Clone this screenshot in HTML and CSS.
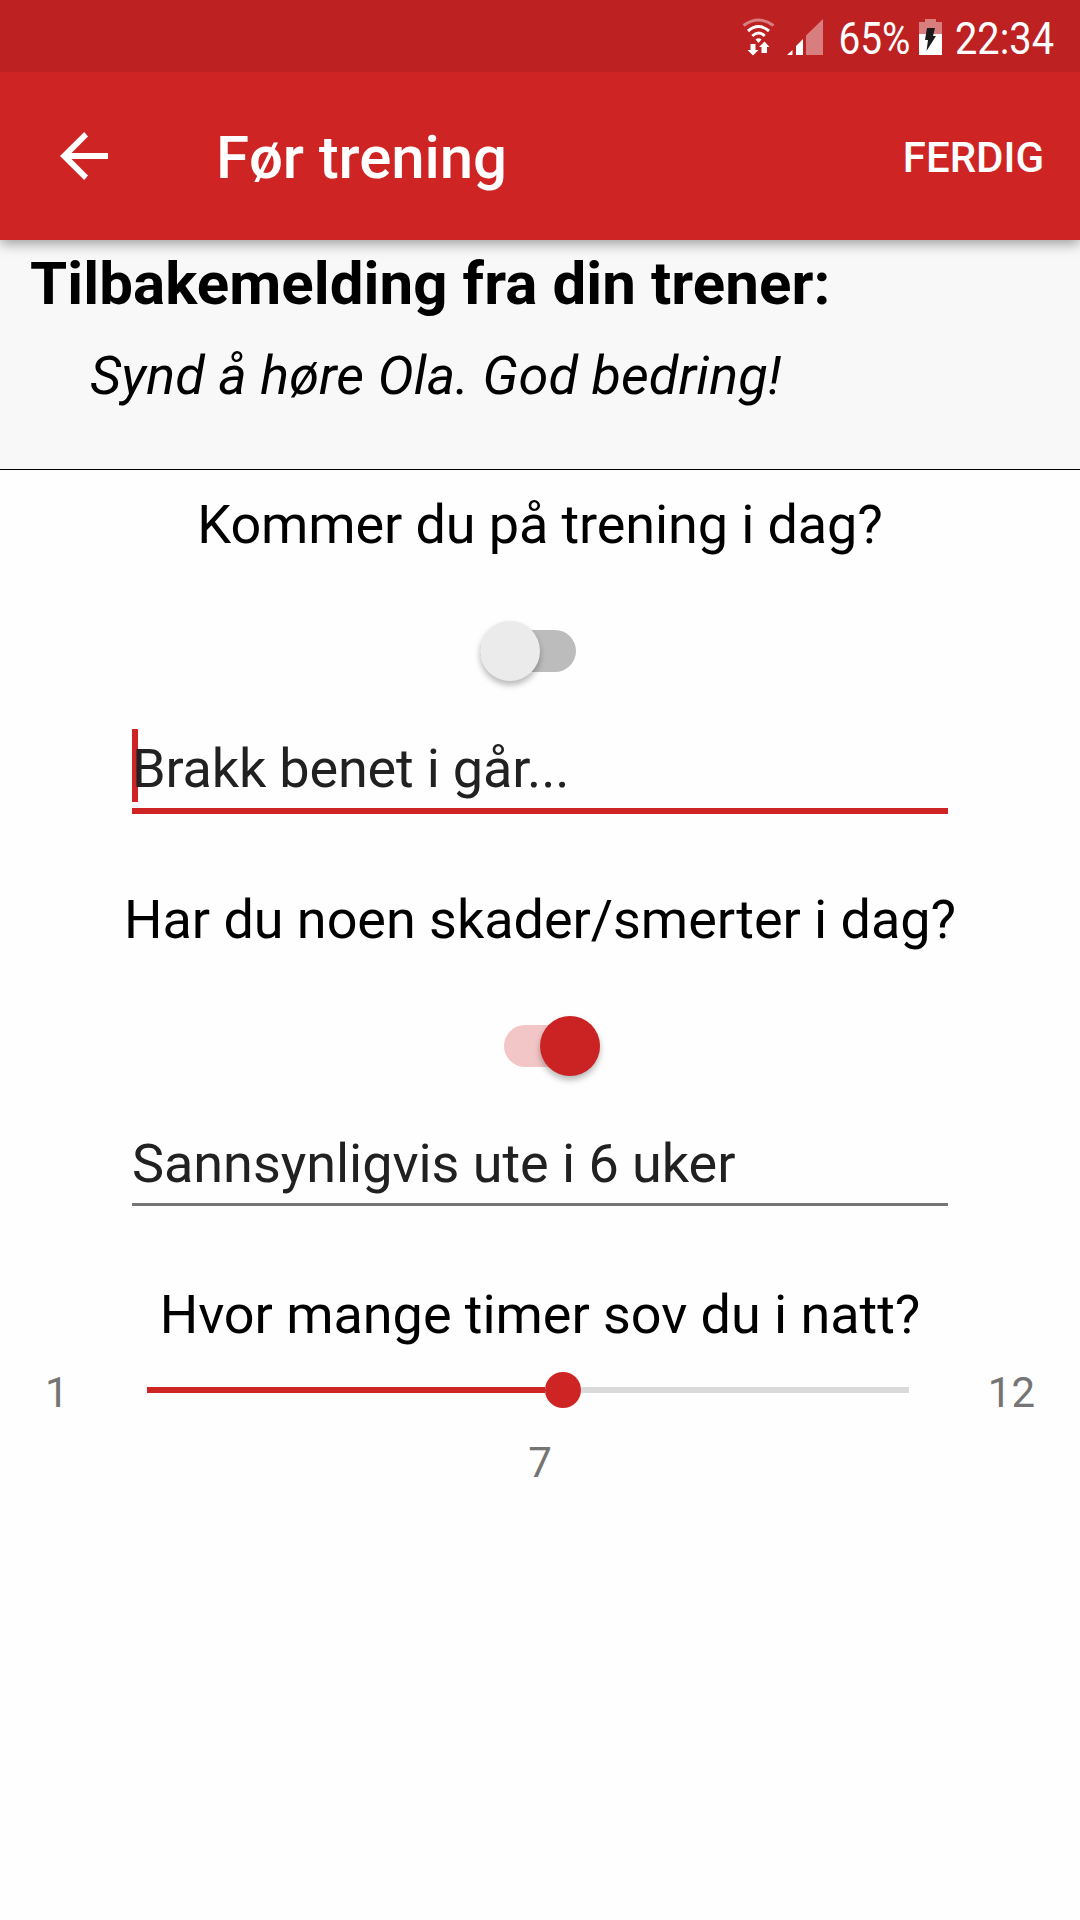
FILE: index.html
```html
<!DOCTYPE html>
<html lang="no">
<head>
<meta charset="utf-8">
<title>Før trening</title>
<link rel="stylesheet" href="styles.css">
</head>
<body>
<div class="statusbar">
  <svg class="status-icons" viewBox="720 0 360 72" width="360" height="72">
    <g fill="none" stroke="#fff" stroke-width="3">
      <path d="M743.5 25.5Q758.5 14.5 773.5 25.5" opacity=".42"/>
      <path d="M748 31Q758.500 22 769 31"/>
      <path d="M752.300 36Q758.500 30 764.700 36"/>
    </g>
    <path d="M755.500 39.500Q758.500 37 761.500 39.500L758.500 43z" fill="#fff"/>
    <path d="M750.500 44h5v6h3l-5.500 5.500-5.500-5.500h3zM761.500 53v-6h-2.500l5.500-5.500 5 5.500h-2.500v6z" fill="#fff"/>
    <path d="M787 55l5.500-5v5zM796 46l7-7v16h-7z" fill="#fff"/>
    <path d="M806 35.500L823 19v36h-17z" fill="#fff" opacity=".42"/>
    <path d="M919 22h6v-3h11v3h6v12h-23z" fill="#fff" opacity=".42"/>
    <path d="M919 34h23v21h-23z" fill="#fff"/>
    <path d="M927 28h8l-2 8h3l-9.500 15 1.500-11h-3z" fill="#1b1b1b"/>
    <text x="838.500" y="54.300" textLength="72" lengthAdjust="spacingAndGlyphs">65%</text>
    <text x="955" y="54.300" textLength="99" lengthAdjust="spacingAndGlyphs">22:34</text>
  </svg>
</div>
<header class="appbar">
  <svg class="back" viewBox="0 0 48 48" width="48" height="48"><path d="M48 21v6H11.500L28 43.500 24.200 48 0 24 24.200 0 28 4.500 11.500 21z" fill="#fff"/></svg>
  <h1 class="title">Før trening</h1>
  <span class="action">FERDIG</span>
</header>
<section class="feedback">
  <h2 class="feedback-title">Tilbakemelding fra din trener:</h2>
  <p class="feedback-text">Synd å høre Ola. God bedring!</p>
</section>
<main class="form">
  <div class="group">
    <p class="question attendance">Kommer du på trening i dag?</p>
    <div class="switch off"><span class="thumb"></span></div>
    <div class="field focused">Brakk benet i går...</div>
  </div>
  <div class="group">
    <p class="question">Har du noen skader/smerter i dag?</p>
    <div class="switch on"><span class="thumb"></span></div>
    <div class="field">Sannsynligvis ute i 6 uker</div>
  </div>
  <div class="group">
    <p class="question">Hvor mange timer sov du i natt?</p>
    <div class="slider-row">
      <span class="bound">1</span>
      <div class="slider"><span class="fill"></span><span class="knob"></span><span class="rest"></span></div>
      <span class="bound bound-max">12</span>
    </div>
    <p class="value">7</p>
  </div>
</main>
</body>
</html>
```
FILE: styles.css
```css
* { box-sizing: border-box; }
body { margin: 0; width: 1080px; height: 1920px; overflow: hidden; background: #fefefe; font-family: Roboto, sans-serif; color: #000; }
h1, h2, p { margin: 0; white-space: nowrap; }
.statusbar { position: relative; z-index: 2; height: 72px; background: #bd2122; display: flex; justify-content: flex-end; }
.status-icons { display: block; }
.status-icons text { font: 400 45px Roboto, sans-serif; fill: #fff; }
.appbar { position: relative; height: 168px; background: #cf2424; color: #fff; display: flex; align-items: center; padding: 0 36px 0 60px; box-shadow: 0 4px 12px rgba(0,0,0,.36); }
.back { display: block; }
.title { flex: 1; margin-left: 108px; font-size: 60px; line-height: 72px; font-weight: 500; letter-spacing: -.1px; padding-top: 4px; }
.action { font-size: 42px; line-height: 50px; font-weight: 500; padding-top: 3px; }
.feedback { height: 230px; background: #f8f8f8; border-bottom: 1px solid #000; padding: 8px 30px 0; }
.feedback-title { font-size: 60px; line-height: 72px; font-weight: 700; letter-spacing: .08px; }
.feedback-text { margin: 20px 0 0 60px; font-size: 54px; line-height: 72px; font-style: italic; letter-spacing: .12px; }
.form { padding-top: 19px; }
.group { height: 395px; }
.question { font-size: 54px; line-height: 72px; text-align: center; letter-spacing: -.05px; }
.attendance { letter-spacing: -.12px; }
.switch { width: 96px; height: 42px; border-radius: 21px; display: flex; align-items: center; }
.off { margin: 69px 0 0 480px; background: #bcbcbc; }
.on { margin: 69px 0 0 504px; background: #f2c6c6; justify-content: flex-end; }
.thumb { flex: none; width: 60px; height: 60px; border-radius: 50%; background: #ebebeb; box-shadow: 0 4px 6px rgba(0,0,0,.28); }
.on .thumb { background: #cb2323; }
.field { margin: 57px 132px 0; height: 82px; border-bottom: 3px solid #757575; color: #212121; font-size: 54px; line-height: 80px; letter-spacing: -.05px; white-space: nowrap; }
.focused { height: 85px; border-bottom: 6px solid #cf2424; background: linear-gradient(#cf2424, #cf2424) 0 0 / 6px 73px no-repeat; letter-spacing: -.18px; }
.slider-row { display: flex; align-items: center; height: 60px; margin-top: 9px; padding-right: 45px; color: #757575; }
.bound { width: 102px; margin-left: 45px; font-size: 42px; line-height: 50px; padding-top: 6px; }
.bound-max { width: auto; margin-left: auto; }
.slider { width: 762px; height: 36px; display: flex; align-items: center; }
.fill { width: 398px; height: 6px; background: #cf2424; }
.knob { width: 36px; height: 36px; border-radius: 50%; background: #cf2424; }
.rest { flex: 1; height: 6px; background: #dadada; }
.value { text-align: center; font-size: 42px; line-height: 50px; margin-top: 18px; color: #757575; }
```
